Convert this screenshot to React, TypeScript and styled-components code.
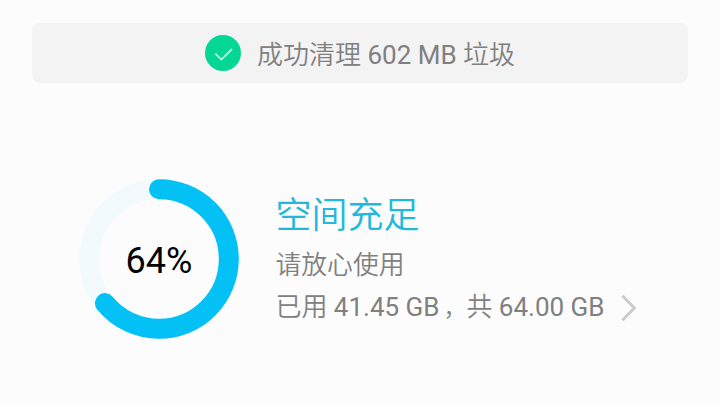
import React from 'react';

import styled, { createGlobalStyle } from 'styled-components';

const storage = { percent: 64, used: '41.45 GB', total: '64.00 GB' };

const RADIUS = 69.8;
const CIRCUMFERENCE = 2 * Math.PI * RADIUS;

const UsageRing = ({ percent }: { percent: number }) => {
  return (
    <RingWrapper>
      <RingSvg viewBox="0 0 160 160">
        <Track cx="80" cy="80" r={RADIUS} />
        <Progress
          cx="80"
          cy="80"
          r={RADIUS}
          strokeDasharray={`${(CIRCUMFERENCE * percent) / 100} ${CIRCUMFERENCE}`}
          transform="rotate(-90 80 80)"
        />
      </RingSvg>
      <Percent>{percent}%</Percent>
    </RingWrapper>
  );
};

const App = () => {
  return (
    <>
      <GlobalStyle />
      <Page>
        <Banner>
          <CheckBadge>
            <svg width="36" height="36" viewBox="0 0 36 36" fill="none">
              <path
                d="M10.3 18.6 L16.4 24.6 L27 14"
                stroke="#c4f7e6"
                strokeWidth="1.8"
              />
            </svg>
          </CheckBadge>
          <BannerText>
            成功清理 <Amount>602 MB</Amount> 垃圾
          </BannerText>
        </Banner>
        <Summary>
          <UsageRing percent={storage.percent} />
          <Info>
            <Title>空间充足</Title>
            <Hint>请放心使用</Hint>
            <DetailRow>
              <Detail>
                已用 <Amount>{storage.used}</Amount>
                <Comma>，</Comma>共 <Amount>{storage.total}</Amount>
              </Detail>
              <Chevron viewBox="0 0 16 28">
                <path d="M1.4 1.8 L13.4 14 L1.4 26.2" />
              </Chevron>
            </DetailRow>
          </Info>
        </Summary>
      </Page>
    </>
  );
};

const GlobalStyle = createGlobalStyle`
  body {
    margin: 0;
    background: #fcfcfc;
    font-family: Roboto, 'Noto Sans CJK SC', sans-serif;
  }
`;

const Page = styled.main`
  width: 720px;
  height: 404px;
  padding: 23px 32px 0;
  box-sizing: border-box;
  overflow: hidden;

  background: #fcfcfc;
`;

const Banner = styled.section`
  height: 60px;
  border-radius: 8px;

  display: flex;
  align-items: center;
  justify-content: center;
  gap: 16px;

  background: #f3f3f3;
`;

const CheckBadge = styled.div`
  width: 36px;
  height: 36px;
  border-radius: 50%;

  background: #04d694;
`;

const BannerText = styled.span`
  padding-top: 3px;

  color: #808080;
  font-size: 26px;
  font-weight: 350;
  line-height: 36px;
  white-space: nowrap;
`;

const Amount = styled.span`
  font-weight: 400;
`;

const Summary = styled.section`
  padding: 96px 0 0 47px;

  display: flex;
  flex-direction: row;
`;

const RingWrapper = styled.div`
  width: 160px;
  height: 160px;

  display: grid;
  place-items: center;
`;

const RingSvg = styled.svg`
  grid-area: 1 / 1;

  width: 160px;
  height: 160px;

  fill: none;
`;

const Track = styled.circle`
  stroke: #f2fafe;
  stroke-width: 20px;
`;

const Progress = styled.circle`
  stroke: #03c1f4;
  stroke-width: 20px;
  stroke-linecap: round;
`;

const Percent = styled.span`
  grid-area: 1 / 1;

  padding-top: 3px;

  color: #000;
  font-size: 36px;
  line-height: 42px;
`;

const Info = styled.div`
  margin-left: 36.5px;
  padding-top: 11px;

  display: flex;
  flex-direction: column;
`;

const Title = styled.h1`
  margin: 0;

  color: #22b8dc;
  font-size: 36px;
  font-weight: 350;
  line-height: 52px;
`;

const Hint = styled.p`
  margin: 5px 0 0;

  color: #808080;
  font-size: 25.8px;
  font-weight: 350;
  line-height: 36px;
`;

const DetailRow = styled.div`
  margin-top: 6px;

  display: flex;
  align-items: center;
  gap: 16px;
`;

const Detail = styled.span`
  color: #808080;
  font-size: 26px;
  font-weight: 350;
  line-height: 36px;
  white-space: nowrap;
`;

const Comma = styled.span`
  padding-left: 4px;

  font-size: 23px;
`;

const Chevron = styled.svg`
  width: 16px;
  height: 28px;

  fill: none;
  stroke: #cbcbcb;
  stroke-width: 3px;
`;

export default App;
